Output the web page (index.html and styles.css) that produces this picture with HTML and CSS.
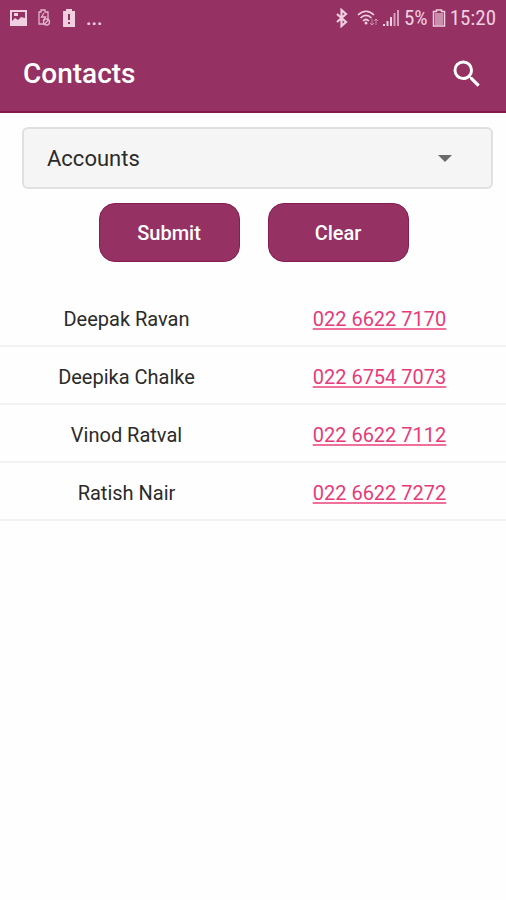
FILE: index.html
```html
<!DOCTYPE html>
<html lang="en">
<head>
<meta charset="utf-8">
<meta name="viewport" content="width=device-width, initial-scale=1">
<title>Contacts</title>
<link rel="stylesheet" href="styles.css">
</head>
<body>
<header class="top">
  <div class="status">
    <div class="status-group status-left">
      <svg width="18" height="18" viewBox="0 0 18 18" aria-hidden="true"><path fill="currentColor" fill-rule="evenodd" d="M0 1h17v16H0zM2 3v9l3-3 3 2 3-3 4 1V3zM4 4h4v3H4z"/></svg>
      <svg width="14" height="18" viewBox="0 0 14 18" aria-hidden="true"><g fill="none" stroke="currentColor" stroke-width="1.300" opacity=".85"><path d="M6 15H1V3h2V1h4v2h3v7"/><path d="M6 4 3.500 8h4L5 12"/><circle cx="8.500" cy="13" r="3"/><path d="m6.500 15 4-4"/></g></svg>
      <svg width="14" height="20" viewBox="0 0 14 20" aria-hidden="true"><path fill="currentColor" fill-rule="evenodd" d="M4 1h6v2h3v16H1V3h3zM6 6v6h2V6zM6 14v2h2v-2z"/></svg>
      <span class="more">...</span>
    </div>
    <div class="status-group status-right">
      <svg width="18" height="20" viewBox="0 0 18 20" aria-hidden="true"><path fill="none" stroke="currentColor" stroke-width="2.200" d="m2 6 9 8-4.500 4V2L11 6l-9 8"/></svg>
      <svg width="21" height="18" viewBox="0 0 21 18" aria-hidden="true"><g fill="none" stroke="currentColor" stroke-width="1.700"><path d="M1 6c5-5 11-5 16 0M3.500 9c3.500-3.500 7.500-3.500 11 0M6 12c2-2 4-2 6 0"/></g><circle cx="9" cy="14" r="1.500" fill="currentColor"/><path fill="none" stroke="currentColor" opacity=".55" d="M15 10v6m-2-2 2 2 2-2M19 16v-6m-2 2 2-2 2 2"/></svg>
      <svg width="18" height="18" viewBox="0 0 18 18" aria-hidden="true"><path fill="currentColor" d="M1 15h2v2H1zM4.500 12h2v5h-2zM8 8h2v9H8z"/><path fill="currentColor" opacity=".7" d="M11.500 4h2v13h-2zM15 1h2v16h-2z"/></svg>
      <span class="level">5%</span>
      <svg width="14" height="20" viewBox="0 0 14 20" aria-hidden="true"><path fill="none" stroke="currentColor" stroke-width="1.500" d="M4.500 3.500V2h5v1.500h3V18h-11V3.500z"/><path fill="currentColor" opacity=".6" d="M3 5h8v12H3z"/></svg>
      <span class="clock">15:20</span>
    </div>
  </div>
  <div class="bar">
    <h1>Contacts</h1>
    <button class="search" type="button" aria-label="Search"><svg width="36" height="36" viewBox="0 0 24 24" aria-hidden="true"><path fill="currentColor" d="M15.500 14h-.79l-.28-.27A6.471 6.471 0 0 0 16 9.500 6.500 6.500 0 1 0 9.500 16c1.610 0 3.090-.59 4.230-1.570l.27.28v.79l5 4.990L20.490 19l-4.990-5zm-6 0C7.010 14 5 11.990 5 9.500S7.010 5 9.500 5 14 7.010 14 9.500 11.990 14 9.500 14z"/></svg></button>
  </div>
</header>
<main>
  <form class="filter">
    <div class="picker">
      <select aria-label="Department"><option>Accounts</option></select>
      <svg class="arrow" width="14" height="7" viewBox="0 0 14 7" aria-hidden="true"><path fill="currentColor" d="M0 0h14L7 7z"/></svg>
    </div>
    <div class="actions">
      <button class="action" type="button">Submit</button>
      <button class="action" type="reset">Clear</button>
    </div>
  </form>
  <table class="contacts" aria-label="Contacts">
    <tbody>
      <tr><td>Deepak Ravan</td><td><a href="tel:02266227170">022 6622 7170</a></td></tr>
      <tr><td>Deepika Chalke</td><td><a href="tel:02267547073">022 6754 7073</a></td></tr>
      <tr><td>Vinod Ratval</td><td><a href="tel:02266227112">022 6622 7112</a></td></tr>
      <tr><td>Ratish Nair</td><td><a href="tel:02266227272">022 6622 7272</a></td></tr>
    </tbody>
  </table>
</main>
</body>
</html>
```
FILE: styles.css
```css
* { box-sizing: border-box; }

body {
  margin: 0;
  background: #fefefe;
  color: #2b2b2b;
  font-family: Roboto, "Liberation Sans", sans-serif;
  font-size: 20px;
}

.top {
  background: #953163;
  border-bottom: 2px solid #821b4c;
  color: #fff;
}

.status {
  display: flex;
  justify-content: space-between;
  height: 36px;
  padding: 0 10px;
  color: #f0cfe0;
}

.status-group {
  display: flex;
  align-items: center;
}

.status-left { gap: 10px; }
.status-right { gap: 4px; }
.status svg { display: block; }

.more { font-weight: 500; }

.level,
.clock {
  font-family: "Roboto Condensed", Roboto, sans-serif;
  font-size: 21px;
}

.bar {
  display: flex;
  align-items: center;
  justify-content: space-between;
  height: 75px;
  padding: 0 21px 0 23px;
}

h1 {
  margin: 0;
  font-size: 28px;
  font-weight: 500;
}

.search {
  display: flex;
  padding: 0;
  border: 0;
  background: none;
  color: inherit;
}

.filter { padding: 14px 13px 0 22px; }

.picker { position: relative; }

select {
  display: block;
  width: 100%;
  height: 62px;
  padding: 0 23px;
  border: 2px solid #e0e0e0;
  border-radius: 6px;
  background: #f5f5f5;
  color: #2b2b2b;
  font: inherit;
  font-size: 22px;
  appearance: none;
}

.arrow {
  position: absolute;
  top: 28px;
  right: 41px;
  color: #6a6a6a;
  pointer-events: none;
}

.actions {
  display: flex;
  justify-content: center;
  gap: 28px;
  padding: 14px 8px 27px 0;
}

.action {
  width: 141px;
  height: 59px;
  border: 1px solid #871c50;
  border-radius: 16px;
  background: #953163;
  color: #fff;
  font: inherit;
  font-weight: 500;
}

.contacts {
  width: 100%;
  table-layout: fixed;
  border-collapse: separate;
  border-spacing: 0;
}

.contacts td {
  height: 58px;
  padding: 3px 0 0;
  border-bottom: 2px solid #f2f2f2;
  text-align: center;
}

.contacts a {
  color: #e63b7a;
  text-decoration-color: #f0709c;
  text-decoration-thickness: 2px;
  text-underline-offset: 2px;
}
```
